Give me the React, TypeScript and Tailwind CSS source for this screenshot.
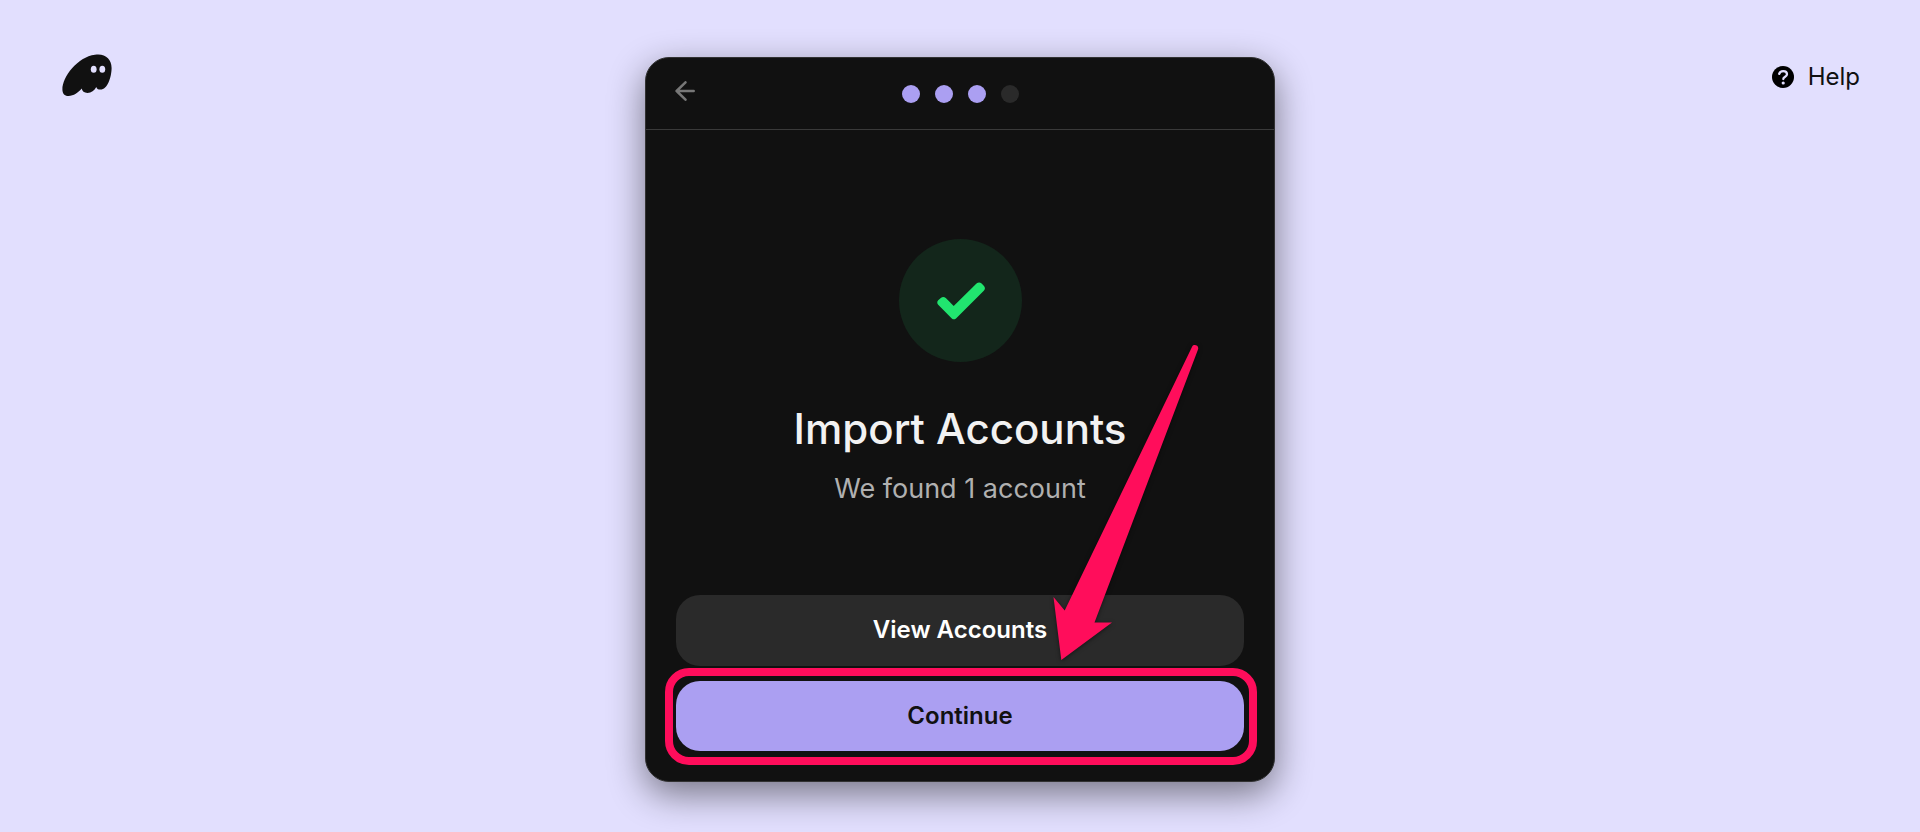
import React from 'react';
import { clsx } from 'clsx';

const TOTAL_STEPS = 4;
const CURRENT_STEP = 3;

const GhostLogo: React.FC = () => (
  <svg viewBox="0 0 50 42" className="h-[42px] w-[50px]" aria-hidden="true">
    <path
      fill="#111111"
      d="M33 .8C43-.8 49.600 5 49.600 14C49.600 23 45.500 35.600 38.500 35.600C36 35.600 34.600 34.600 34.300 33C32.300 36.500 29.300 38.900 25.500 38.900C22 38.900 20.200 37.300 19.700 34.500C16.500 38.300 11.500 42 6.500 42C2.300 42 .4 39.300 .4 35.500C.4 23 15.500 3 33 .8Z"
    />
    <ellipse cx="31.700" cy="15.200" rx="2.900" ry="3.500" fill="#e2dffe" />
    <ellipse cx="40.300" cy="15.200" rx="2.900" ry="3.500" fill="#e2dffe" />
  </svg>
);

const HelpIcon: React.FC = () => (
  <svg viewBox="0 0 22 22" className="h-[22px] w-[22px]" fill="none" aria-hidden="true">
    <circle cx="11" cy="11" r="11" fill="#000000" />
    <path
      d="M7.200 7.900C7.700 6 9.200 5.200 11.200 5.200C13.500 5.200 15 6.500 15 8.300C15 10.700 11.300 10.700 11.300 13"
      stroke="#e2dffe"
      strokeWidth="2.300"
      strokeLinecap="round"
    />
    <circle cx="11.200" cy="17" r="1.600" fill="#e2dffe" />
  </svg>
);

const BackIcon: React.FC = () => (
  <svg viewBox="0 0 20 20" className="h-5 w-5" fill="none" aria-hidden="true">
    <path
      d="M10.500 1.300L1.600 10L10.500 18.700M1.600 10H18.700"
      stroke="#777777"
      strokeWidth="2.500"
      strokeLinecap="round"
      strokeLinejoin="round"
    />
  </svg>
);

const CheckIcon: React.FC = () => (
  <svg viewBox="0 0 48 38" className="h-[38px] w-12" aria-hidden="true">
    <path
      fill="#21e56f"
      d="M1.200 18.300L3.800 15.900Q6.300 14 8.800 16L16.700 24.100L39.500 1.600Q42 -.6 44.600 1.400L47 3.900Q49 6.300 46.800 8.700L19 36.500Q16.900 38.200 14.800 36.500L1.200 22.800Q-.7 20.500 1.200 18.300Z"
    />
  </svg>
);

const PointerArrow: React.FC = () => (
  <svg
    viewBox="0 0 153 325"
    className="pointer-events-none absolute right-[42px] bottom-0 h-[325px] w-[153px] drop-shadow-[0_1px_2px_rgba(0,0,0,0.5)]"
    aria-hidden="true"
  >
    <path
      fill="#ff0d5b"
      d="M143.200 5.500C144.800 2.500 150.500 4.500 149 8.500L45.500 281.500L63 281.500L12.300 319L4.500 256L15.700 269.500Z"
    />
  </svg>
);

const StepDots: React.FC = () => (
  <div className="flex gap-[15px]" role="img" aria-label={`Step ${CURRENT_STEP} of ${TOTAL_STEPS}`}>
    {Array.from({ length: TOTAL_STEPS }, (_, i) => (
      <span
        key={i}
        className={clsx('h-[18px] w-[18px] rounded-full', i < CURRENT_STEP ? 'bg-[#ab9ff2]' : 'bg-[#2a2a2a]')}
      />
    ))}
  </div>
);

const App: React.FC = () => {
  return (
    <div className="grid min-h-screen grid-cols-[1fr_minmax(0,630px)_1fr] items-start bg-[#e2dffe] font-['Inter',sans-serif]">
      <a href="#" aria-label="Home" className="mt-[54px] ml-[62px] justify-self-start">
        <GhostLogo />
      </a>

      <main className="mt-[57px] mb-[50px] rounded-[24px] border border-[#323232] bg-[#111111] shadow-[0_12px_36px_rgba(0,0,0,0.48)]">
        <header className="grid h-[72px] grid-cols-[1fr_auto_1fr] items-center border-b border-[#3a3a3a] px-[29px]">
          <button type="button" aria-label="Back" className="mb-1.5 justify-self-start">
            <BackIcon />
          </button>
          <StepDots />
        </header>

        <section className="flex flex-col items-center pt-[109px] text-center">
          <div className="flex h-[123px] w-[123px] items-center justify-center rounded-full bg-[#13261b] pl-0.5">
            <CheckIcon />
          </div>
          <h1 className="mt-[41px] text-[42px] leading-[52px] font-medium text-[#f2f2f2]">Import Accounts</h1>
          <p className="mt-4 text-[27px] leading-9 text-[#b0b0b0]">We found 1 account</p>
        </section>

        <div className="mt-[88px] flex flex-col gap-[15px] px-[30px] pb-[30px] text-2xl font-semibold">
          <div className="relative">
            <button type="button" className="h-[71px] w-full rounded-[24px] bg-[#2a2a2a] pb-0.5 text-white">
              View Accounts
            </button>
            <PointerArrow />
          </div>
          <div className="relative">
            <button type="button" className="h-[70px] w-full rounded-[24px] bg-[#ab9ff2] text-[#111111]">
              Continue
            </button>
            <span className="pointer-events-none absolute -top-[13px] -right-[13px] -bottom-3.5 -left-[11px] rounded-[24px] border-8 border-[#ff0d5b]" />
          </div>
        </div>
      </main>

      <a href="#" className="mt-[59px] mr-[60px] flex items-center gap-3.5 justify-self-end text-2xl leading-9 text-[#111111]">
        <HelpIcon />
        Help
      </a>
    </div>
  );
};

export default App;
